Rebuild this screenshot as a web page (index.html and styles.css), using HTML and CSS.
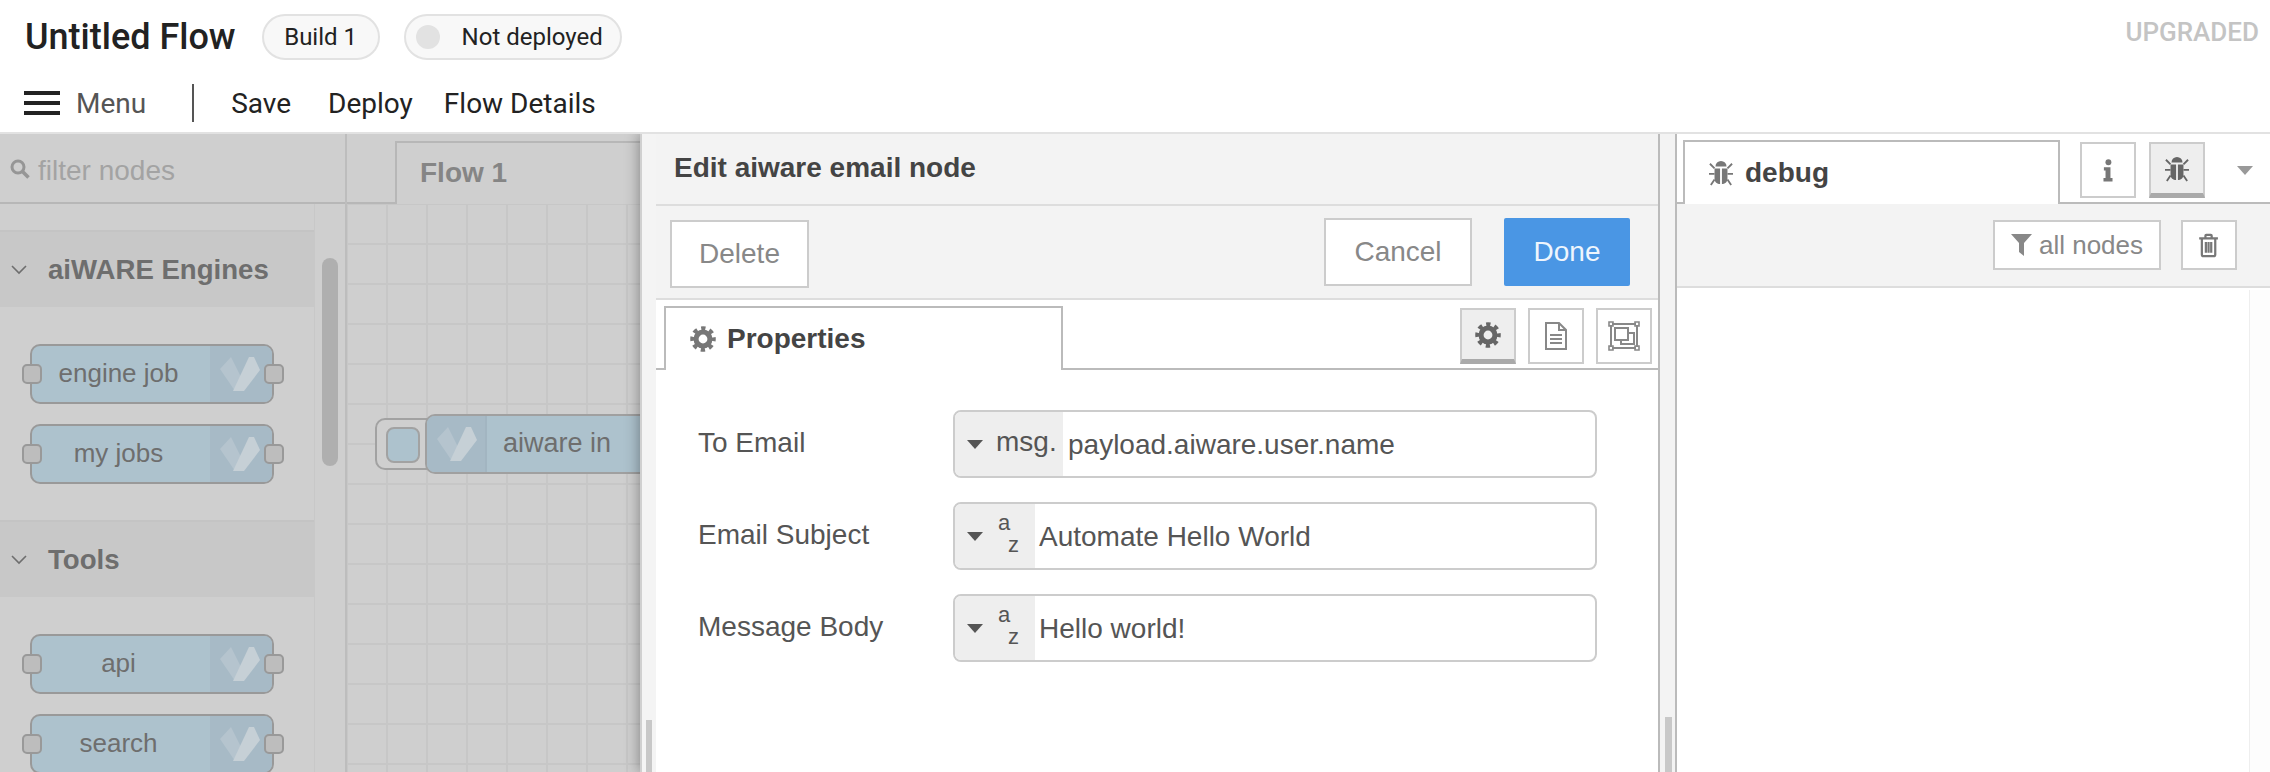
FILE: index.html
```html
<!DOCTYPE html>
<html lang="en">
<head>
    <meta charset="UTF-8">
    <title>Untitled Flow</title>
    <link rel="stylesheet" href="styles.css">
</head>
<body>
    <svg class="icon-defs" width="0" height="0">
        <symbol id="i-logo" viewBox="0 0 62 60">
            <polygon class="logo-left" points="10,25 21,13 34,39 25,47"/>
            <polygon class="logo-right" points="39,13 44,13 50,26 34,47 23,47"/>
        </symbol>
        <symbol id="i-gear" viewBox="0 0 28 28">
            <circle cx="14" cy="14" r="7.5" fill="none" stroke="currentColor" stroke-width="5.5"/>
            <circle cx="14" cy="14" r="11.5" fill="none" stroke="currentColor" stroke-width="4.5" stroke-dasharray="4.6 4.43" stroke-dashoffset="2.3"/>
        </symbol>
        <symbol id="i-bug" viewBox="0 0 26 30">
            <path fill="currentColor" d="M7 8a6 6 0 0 1 12 0z"/>
            <path fill="currentColor" d="M6 10h6v17c-3 0-6-2-6-6zM14 10h6v11c0 4-3 6-6 6z"/>
            <path fill="none" stroke="currentColor" stroke-width="2" d="M1 5l5 5M25 5l-5 5M0 16h6M26 16h-6M2 28l4-6M24 28l-4-6"/>
        </symbol>
        <symbol id="i-file" viewBox="0 0 24 28">
            <path fill="none" stroke="currentColor" stroke-width="2" d="M2 1h13l7 7v19H2zM15 1v7h7"/>
            <path fill="none" stroke="currentColor" stroke-width="2" d="M6 13h12M6 17h12M6 21h12"/>
        </symbol>
        <symbol id="i-nodes" viewBox="0 0 32 30">
            <path fill="none" stroke="currentColor" stroke-width="2" d="M4 3h24M4 27h24M3 4v22M29 4v22"/>
            <path fill="none" stroke="currentColor" stroke-width="2" d="M7 7h13v12H7zM13 19v4h13V12h-6"/>
            <path fill="none" stroke="currentColor" stroke-width="1.6" d="M1 1h4v4H1zM27 1h4v4h-4zM1 25h4v4H1zM27 25h4v4h-4z"/>
        </symbol>
        <symbol id="i-info" viewBox="0 0 12 28">
            <circle cx="6.5" cy="4" r="3.6" fill="currentColor"/>
            <path fill="currentColor" d="M1 10h8v13h2.5v4.500H.500V23H3v-9H1z"/>
        </symbol>
        <symbol id="i-filter" viewBox="0 0 21 22">
            <path fill="currentColor" d="M0 0h21l-8 9v13l-5-4V9z"/>
        </symbol>
        <symbol id="i-trash" viewBox="0 0 22 28">
            <path fill="none" stroke="currentColor" stroke-width="2.500" d="M0 6h21M7 6V3a1 1 0 0 1 1-1h5a1 1 0 0 1 1 1v3M3 6v18a2 2 0 0 0 2 2h11a2 2 0 0 0 2-2V6M7.500 10v12M10.500 10v12M13.500 10v12"/>
        </symbol>
        <symbol id="i-search" viewBox="0 0 20 20">
            <circle cx="8" cy="8" r="6" fill="none" stroke="currentColor" stroke-width="3"/>
            <path stroke="currentColor" stroke-width="3.500" d="M12.500 12.500L18.500 18.500"/>
        </symbol>
        <symbol id="i-chevron" viewBox="0 0 16 10">
            <path fill="none" stroke="currentColor" stroke-width="1.600" d="M1 1l7 7 7-7"/>
        </symbol>
    </svg>

    <header class="topbar">
        <div class="title-row">
            <h1 class="flow-title">Untitled Flow</h1>
            <span class="pill pill-build">Build 1</span>
            <span class="pill pill-status"><i class="status-dot"></i>Not deployed</span>
            <span class="upgraded">UPGRADED</span>
        </div>
        <nav class="menu-row">
            <span class="burger"><i></i><i></i><i></i></span>
            <span class="menu-label">Menu</span>
            <span class="menu-sep"></span>
            <a class="menu-link link-save">Save</a>
            <a class="menu-link link-deploy">Deploy</a>
            <a class="menu-link">Flow Details</a>
        </nav>
    </header>

    <main class="editor">
        <aside class="palette">
            <div class="filter-bar">
                <svg class="search-icon"><use href="#i-search"/></svg>
                <span>filter nodes</span>
            </div>
            <div class="palette-body">
                <div class="palette-list">
                    <div class="palette-top"></div>
                    <div class="section-head">
                        <svg class="chevron"><use href="#i-chevron"/></svg>aiWARE Engines
                    </div>
                    <div class="section-nodes">
                        <div class="pnode"><i class="port port-l"></i><span class="pnode-label">engine job</span><span class="pnode-icon"><svg><use href="#i-logo"/></svg></span><i class="port port-r"></i></div>
                        <div class="pnode"><i class="port port-l"></i><span class="pnode-label">my jobs</span><span class="pnode-icon"><svg><use href="#i-logo"/></svg></span><i class="port port-r"></i></div>
                    </div>
                    <div class="section-head">
                        <svg class="chevron"><use href="#i-chevron"/></svg>Tools
                    </div>
                    <div class="section-nodes">
                        <div class="pnode"><i class="port port-l"></i><span class="pnode-label">api</span><span class="pnode-icon"><svg><use href="#i-logo"/></svg></span><i class="port port-r"></i></div>
                        <div class="pnode"><i class="port port-l"></i><span class="pnode-label">search</span><span class="pnode-icon"><svg><use href="#i-logo"/></svg></span><i class="port port-r"></i></div>
                    </div>
                </div>
                <div class="palette-scroll"><div class="palette-thumb"></div></div>
            </div>
        </aside>

        <section class="workspace">
            <div class="ws-tabs"><div class="ws-tab">Flow 1</div></div>
            <div class="canvas">
                <div class="inject-btn"><i></i></div>
                <div class="flow-node">
                    <span class="flow-node-icon"><svg><use href="#i-logo"/></svg></span>
                    <span class="flow-node-label">aiware in</span>
                </div>
            </div>

            <div class="tray">
                <div class="tray-handle"><div class="handle-thumb"></div></div>
                <div class="tray-panel">
                    <div class="tray-title">Edit aiware email node</div>
                    <div class="tray-actions">
                        <button class="btn btn-delete">Delete</button>
                        <button class="btn btn-cancel">Cancel</button>
                        <button class="btn btn-done">Done</button>
                    </div>
                    <div class="tray-tabs">
                        <div class="prop-tab"><svg class="prop-gear"><use href="#i-gear"/></svg>Properties</div>
                        <div class="tab-icons">
                            <span class="tab-icon active"><svg class="ico-gear"><use href="#i-gear"/></svg></span>
                            <span class="tab-icon"><svg class="ico-file"><use href="#i-file"/></svg></span>
                            <span class="tab-icon"><svg class="ico-nodes"><use href="#i-nodes"/></svg></span>
                        </div>
                    </div>
                    <div class="form">
                        <div class="form-row">
                            <label>To Email</label>
                            <div class="typed-input">
                                <span class="type-select type-msg"><i class="caret"></i>msg.</span>
                                <span class="typed-value value-msg">payload.aiware.user.name</span>
                            </div>
                        </div>
                        <div class="form-row">
                            <label>Email Subject</label>
                            <div class="typed-input">
                                <span class="type-select"><i class="caret"></i><span class="az"><b>a</b><b>z</b></span></span>
                                <span class="typed-value">Automate Hello World</span>
                            </div>
                        </div>
                        <div class="form-row">
                            <label>Message Body</label>
                            <div class="typed-input">
                                <span class="type-select"><i class="caret"></i><span class="az"><b>a</b><b>z</b></span></span>
                                <span class="typed-value">Hello world!</span>
                            </div>
                        </div>
                    </div>
                </div>
            </div>
        </section>

        <div class="separator"><div class="sep-thumb"></div></div>

        <aside class="sidebar">
            <div class="side-tabs">
                <div class="debug-tab"><svg class="bug-tab"><use href="#i-bug"/></svg>debug</div>
                <span class="side-btn btn-info"><svg class="ico-info"><use href="#i-info"/></svg></span>
                <span class="side-btn active"><svg class="ico-bug"><use href="#i-bug"/></svg></span>
                <i class="side-caret"></i>
            </div>
            <div class="side-toolbar">
                <span class="tool-btn tool-filter"><svg class="ico-filter"><use href="#i-filter"/></svg>all nodes</span>
                <span class="tool-btn tool-trash"><svg class="ico-trash"><use href="#i-trash"/></svg></span>
            </div>
            <div class="side-content"><div class="side-gutter"></div></div>
        </aside>
    </main>
</body>
</html>
```

FILE: styles.css
```css
* {
    box-sizing: border-box;
}

html, body {
    margin: 0;
    height: 772px;
    overflow: hidden;
    background-color: #fff;
    font-family: "Liberation Sans", Arial, sans-serif;
}

.icon-defs {
    position: absolute;
}

.logo-left {
    fill: #b5c4ce;
}

.logo-right {
    fill: #c6d0d6;
}

/* top bar */
.topbar {
    height: 134px;
    border-bottom: 2px solid #e2e2e2;
    font-family: Roboto, sans-serif;
}

.title-row {
    display: flex;
    align-items: center;
    height: 74px;
    padding-left: 25px;
    padding-right: 11px;
}

.flow-title {
    margin: 0 26px 0 0;
    font-size: 36px;
    font-weight: 500;
    color: #222;
}

.pill {
    display: flex;
    align-items: center;
    height: 46px;
    border: 2px solid #e2e2e2;
    border-radius: 23px;
    background-color: #f8f8f8;
    font-size: 24px;
    color: #222;
}

.pill-build {
    width: 118px;
    justify-content: center;
    margin-right: 24px;
}

.pill-status {
    width: 218px;
    padding-left: 10px;
}

.status-dot {
    width: 24px;
    height: 24px;
    margin-right: 22px;
    border-radius: 50%;
    background-color: #e2e2e2;
}

.upgraded {
    margin-left: auto;
    font-size: 26px;
    font-weight: 500;
    color: #c4c4c4;
    margin-top: -10px;
}

.menu-row {
    display: flex;
    align-items: center;
    height: 58px;
    padding-left: 24px;
    font-size: 28px;
    color: #222;
}

.burger {
    display: flex;
    flex-direction: column;
    justify-content: space-between;
    width: 36px;
    height: 24px;
    margin-right: 16px;
}

.burger i {
    height: 4px;
    background-color: #222;
}

.menu-label {
    color: #555;
}

.menu-sep {
    width: 2px;
    height: 38px;
    margin: 0 37px 0 46px;
    background-color: #555;
}

.link-save {
    margin-right: 37px;
}

.link-deploy {
    margin-right: 31px;
}

.editor {
    display: flex;
    height: 638px;
}

/* palette */
.palette {
    width: 347px;
    flex: none;
    display: flex;
    flex-direction: column;
    border-right: 2px solid #bdbdbd;
    background-color: #cfcfcf;
}

.filter-bar {
    display: flex;
    align-items: center;
    height: 70px;
    padding: 5px 0 0 10px;
    border-bottom: 2px solid #b7b7b7;
    font-size: 28px;
    color: #a3a3a3;
}

.search-icon {
    width: 20px;
    height: 20px;
    margin: -3px 8px 0 0;
    color: #969696;
}

.palette-body {
    flex: 1;
    display: flex;
    min-height: 0;
}

.palette-list {
    width: 315px;
    overflow: hidden;
    border-right: 1px solid #c8c8c8;
}

.palette-top {
    height: 28px;
    border-bottom: 2px solid #c4c4c4;
}

.section-head {
    display: flex;
    align-items: center;
    height: 75px;
    padding-left: 11px;
    background-color: #c8c8c8;
    font-size: 27.600px;
    font-weight: bold;
    color: #6e6e6e;
}

.chevron {
    width: 16px;
    height: 10px;
    margin-right: 21px;
    color: #6e6e6e;
}

.section-nodes {
    display: flex;
    flex-direction: column;
    gap: 20px;
    height: 215px;
    padding: 37px 0 0 30px;
    border-bottom: 2px solid #c4c4c4;
}

.pnode {
    position: relative;
    flex: none;
    display: flex;
    width: 244px;
    height: 60px;
    border: 2px solid #999;
    border-radius: 10px;
    background-color: #adc2cd;
}

.pnode-label {
    flex: 1;
    padding-right: 5px;
    text-align: center;
    line-height: 54px;
    font-size: 26px;
    color: #6e6e6e;
}

.pnode-icon {
    width: 62px;
    flex: none;
    border-radius: 0 8px 8px 0;
    background-color: #a7bac6;
}

.pnode-icon svg {
    display: block;
    width: 62px;
    height: 60px;
    margin-top: -2px;
    filter: blur(0.6px);
}

.port {
    position: absolute;
    top: 18px;
    width: 20px;
    height: 20px;
    border: 2px solid #999;
    border-radius: 5px;
    background-color: #bdbdbd;
}

.port-l {
    left: -10px;
}

.port-r {
    right: -12px;
}

.palette-scroll {
    width: 30px;
    padding: 54px 0 0 7px;
}

.palette-thumb {
    width: 16px;
    height: 208px;
    border-radius: 8px;
    background-color: #afafaf;
}

/* workspace */
.workspace {
    position: relative;
    width: 1313px;
    flex: none;
    display: flex;
    flex-direction: column;
    overflow: hidden;
    background-color: #cfcfcf;
}

.ws-tabs {
    height: 70px;
    padding: 7px 0 0 48px;
    border-bottom: 2px solid #b7b7b7;
}

.ws-tab {
    position: relative;
    top: 0;
    width: 400px;
    height: 63px;
    padding-left: 23px;
    border: 2px solid #b7b7b7;
    border-bottom: none;
    background-color: #cfcfcf;
    line-height: 60px;
    font-size: 28px;
    font-weight: bold;
    color: #858585;
}

.canvas {
    position: relative;
    flex: 1;
    background-image:
        linear-gradient(#c7c7c7 2px, transparent 2px),
        linear-gradient(90deg, #c7c7c7 2px, transparent 2px);
    background-size: 40px 40px;
    background-position: 39px 39px;
}

.inject-btn {
    position: absolute;
    left: 28px;
    top: 214px;
    width: 60px;
    height: 52px;
    padding: 7px 0 0 9px;
    border: 2px solid #a2a2a2;
    border-radius: 10px 0 0 10px;
    background-color: #cfcfcf;
}

.inject-btn i {
    display: block;
    width: 34px;
    height: 36px;
    border: 2px solid #a2a2a2;
    border-radius: 8px;
    background-color: #adc2cd;
}

.flow-node {
    position: absolute;
    left: 78px;
    top: 210px;
    display: flex;
    width: 260px;
    height: 60px;
    border: 2px solid #a0a0a0;
    border-radius: 10px;
    background-color: #adc2cd;
}

.flow-node-icon {
    width: 60px;
    flex: none;
    border-right: 2px solid #a2b5c1;
    border-radius: 8px 0 0 8px;
    background-color: #a7bac6;
}

.flow-node-icon svg {
    display: block;
    width: 62px;
    height: 60px;
    margin-top: -2px;
    filter: blur(0.6px);
}

.flow-node-label {
    padding-left: 16px;
    line-height: 54px;
    font-size: 27px;
    color: #6e6e6e;
}

/* edit tray, lies over the workspace */
.tray {
    position: absolute;
    top: 0;
    right: 0;
    bottom: 0;
    width: 1020px;
    display: flex;
    box-shadow: 0 0 14px rgba(0, 0, 0, 0.4);
}

.tray-handle {
    position: relative;
    width: 16px;
    flex: none;
    border-left: 2px solid #d0d0d0;
    background-color: #f4f4f4;
}

.handle-thumb {
    position: absolute;
    left: 4px;
    bottom: 0;
    width: 6px;
    height: 52px;
    background-color: #c8c8c8;
}

.tray-panel {
    flex: 1;
    display: flex;
    flex-direction: column;
    border-right: 2px solid #bbb;
    background-color: #fff;
}

.tray-title {
    height: 72px;
    padding-left: 18px;
    border-bottom: 2px solid #ddd;
    background-color: #f3f3f3;
    line-height: 68px;
    font-size: 28px;
    font-weight: bold;
    color: #444;
}

.tray-actions {
    display: flex;
    align-items: flex-start;
    height: 94px;
    padding: 12px 28px 0 14px;
    border-bottom: 2px solid #ddd;
    background-color: #f3f3f3;
}

.btn {
    height: 68px;
    padding: 0;
    border: 2px solid #ccc;
    background-color: #fff;
    font-family: "Liberation Sans", Arial, sans-serif;
    font-size: 28px;
    color: #888;
}

.btn-delete {
    width: 139px;
    margin: 2px auto 0 0;
}

.btn-cancel {
    width: 148px;
    margin-right: 32px;
}

.btn-done {
    width: 126px;
    border: none;
    border-radius: 2px;
    background-color: #4a96e4;
    color: #eef5fd;
}

.tray-tabs {
    display: flex;
    height: 70px;
    border-bottom: 2px solid #bbb;
}

.prop-tab {
    display: flex;
    align-items: center;
    width: 399px;
    height: 64px;
    margin: 6px 0 0 8px;
    padding-left: 24px;
    border: 2px solid #bbb;
    border-bottom: none;
    background-color: #fff;
    font-size: 28px;
    font-weight: bold;
    color: #444;
}

.prop-gear {
    width: 26px;
    height: 26px;
    margin-right: 11px;
    color: #777;
}

.tab-icons {
    display: flex;
    gap: 12px;
    margin-left: auto;
    padding: 8px 6px 0 0;
}

.tab-icon {
    display: flex;
    align-items: center;
    justify-content: center;
    width: 56px;
    height: 56px;
    border: 2px solid #ccc;
    color: #888;
}

.tab-icon.active {
    border-bottom: 5px solid #aaa;
    background-color: #eee;
    color: #666;
}

.ico-gear {
    width: 26px;
    height: 26px;
}

.ico-file {
    width: 24px;
    height: 28px;
}

.ico-nodes {
    width: 32px;
    height: 30px;
}

.form {
    display: flex;
    flex-direction: column;
    gap: 24px;
    padding: 40px 0 0 42px;
}

.form-row {
    display: flex;
    height: 68px;
    font-size: 28px;
    color: #555;
}

.form-row label {
    width: 255px;
    flex: none;
    line-height: 65px;
}

.typed-input {
    display: flex;
    width: 644px;
    height: 68px;
    border: 2px solid #ccc;
    border-radius: 8px;
    overflow: hidden;
}

.type-select {
    position: relative;
    display: flex;
    align-items: center;
    width: 80px;
    flex: none;
    background-color: #eee;
    line-height: 60px;
}

.type-msg {
    width: 108px;
    padding-bottom: 4px;
}

.caret {
    width: 0;
    height: 0;
    margin: 0 13px 0 12px;
    border-left: 8px solid transparent;
    border-right: 8px solid transparent;
    border-top: 9px solid #555;
}

.type-msg .caret {
    margin-top: 4px;
}

.az {
    position: relative;
    width: 24px;
    height: 50px;
    font-size: 22px;
}

.az b {
    position: absolute;
    font-weight: normal;
    line-height: 24px;
}

.az b:first-child {
    left: 2px;
    top: 0;
}

.az b:last-child {
    left: 12px;
    top: 22px;
}

.typed-value {
    padding-left: 4px;
    line-height: 66px;
}

.value-msg {
    padding-left: 5px;
}

/* sidebar */
.separator {
    position: relative;
    width: 17px;
    flex: none;
    border-right: 2px solid #bbb;
    background-color: #f3f3f3;
}

.sep-thumb {
    position: absolute;
    left: 5px;
    bottom: 0;
    width: 7px;
    height: 55px;
    background-color: #c8c8c8;
}

.sidebar {
    flex: 1;
    display: flex;
    flex-direction: column;
}

.side-tabs {
    position: relative;
    display: flex;
    height: 70px;
    padding-left: 6px;
    border-bottom: 2px solid #bbb;
}

.debug-tab {
    display: flex;
    align-items: center;
    width: 377px;
    height: 64px;
    margin-top: 6px;
    padding-left: 24px;
    border: 2px solid #bbb;
    border-bottom: none;
    background-color: #fff;
    font-size: 28px;
    font-weight: bold;
    color: #444;
}

.bug-tab {
    width: 24px;
    height: 28px;
    margin-right: 12px;
    color: #777;
}

.side-btn {
    display: flex;
    align-items: center;
    justify-content: center;
    width: 56px;
    height: 56px;
    margin: 8px 0 0 20px;
    border: 2px solid #ccc;
    color: #777;
}

.side-btn.active {
    margin-left: 13px;
    border-bottom: 5px solid #aaa;
    background-color: #eee;
    color: #666;
}

.ico-info {
    width: 10px;
    height: 23px;
}

.ico-bug {
    width: 24px;
    height: 28px;
}

.side-caret {
    width: 0;
    height: 0;
    margin: 32px 0 0 32px;
    border-left: 8px solid transparent;
    border-right: 8px solid transparent;
    border-top: 9px solid #999;
}

.side-toolbar {
    display: flex;
    justify-content: flex-end;
    gap: 20px;
    height: 84px;
    padding: 16px 33px 0 0;
    border-bottom: 2px solid #ddd;
    background-color: #f3f3f3;
}

.tool-btn {
    display: flex;
    align-items: center;
    justify-content: center;
    height: 50px;
    border: 2px solid #ccc;
    background-color: #fff;
    font-size: 26px;
    color: #888;
}

.tool-filter {
    width: 168px;
}

.tool-trash {
    width: 56px;
}

.ico-filter {
    width: 21px;
    height: 22px;
    margin-right: 7px;
    color: #888;
}

.ico-trash {
    width: 20px;
    height: 25px;
    color: #777;
}

.side-content {
    flex: 1;
    display: flex;
    justify-content: flex-end;
}

.side-gutter {
    width: 21px;
    margin-top: 2px;
    border-left: 1px solid #eee;
    background-color: #fdfdfd;
}
```
